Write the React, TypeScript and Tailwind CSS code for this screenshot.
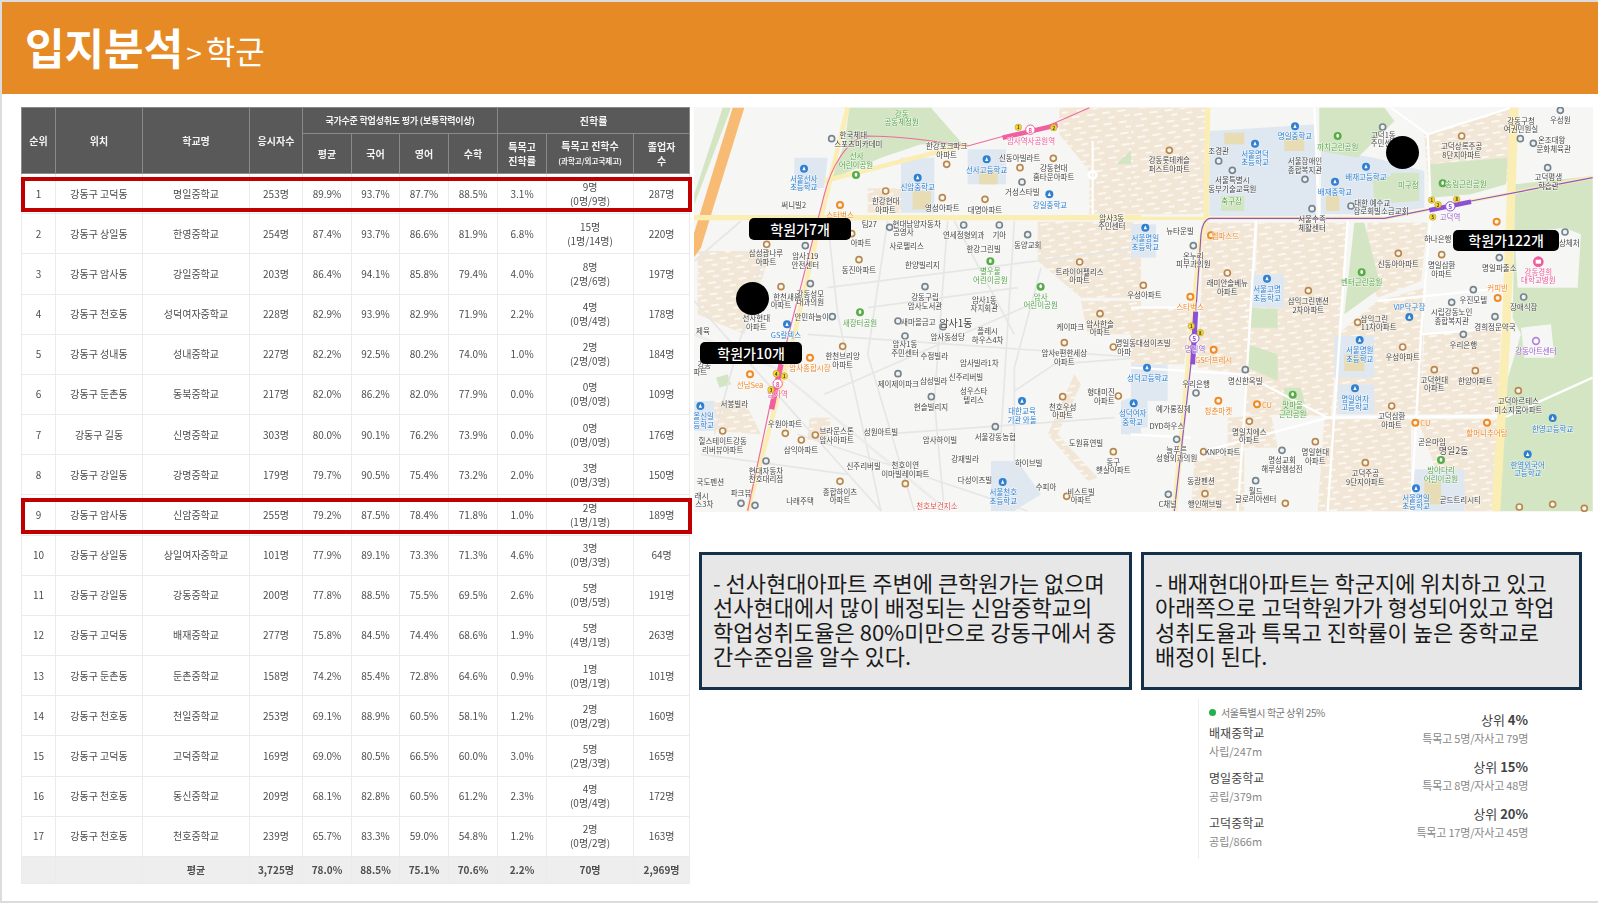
import React from "react";

type R = [number, string, string, string, string, string, string, string, string, string, string, string];
const rows: R[] = [
  [1,"강동구 고덕동","명일중학교","253명","89.9%","93.7%","87.7%","88.5%","3.1%","9명","(0명/9명)","287명"],
  [2,"강동구 상일동","한영중학교","254명","87.4%","93.7%","86.6%","81.9%","6.8%","15명","(1명/14명)","220명"],
  [3,"강동구 암사동","강일중학교","203명","86.4%","94.1%","85.8%","79.4%","4.0%","8명","(2명/6명)","197명"],
  [4,"강동구 천호동","성덕여자중학교","228명","82.9%","93.9%","82.9%","71.9%","2.2%","4명","(0명/4명)","178명"],
  [5,"강동구 성내동","성내중학교","227명","82.2%","92.5%","80.2%","74.0%","1.0%","2명","(2명/0명)","184명"],
  [6,"강동구 둔촌동","동북중학교","217명","82.0%","86.2%","82.0%","77.9%","0.0%","0명","(0명/0명)","109명"],
  [7,"강동구 길동","신명중학교","303명","80.0%","90.1%","76.2%","73.9%","0.0%","0명","(0명/0명)","176명"],
  [8,"강동구 강일동","강명중학교","179명","79.7%","90.5%","75.4%","73.2%","2.0%","3명","(0명/3명)","150명"],
  [9,"강동구 암사동","신암중학교","255명","79.2%","87.5%","78.4%","71.8%","1.0%","2명","(1명/1명)","189명"],
  [10,"강동구 상일동","상일여자중학교","101명","77.9%","89.1%","73.3%","71.3%","4.6%","3명","(0명/3명)","64명"],
  [11,"강동구 강일동","강동중학교","200명","77.8%","88.5%","75.5%","69.5%","2.6%","5명","(0명/5명)","191명"],
  [12,"강동구 고덕동","배재중학교","277명","75.8%","84.5%","74.4%","68.6%","1.9%","5명","(4명/1명)","263명"],
  [13,"강동구 둔촌동","둔촌중학교","158명","74.2%","85.4%","72.8%","64.6%","0.9%","1명","(0명/1명)","101명"],
  [14,"강동구 천호동","천일중학교","253명","69.1%","88.9%","60.5%","58.1%","1.2%","2명","(0명/2명)","160명"],
  [15,"강동구 고덕동","고덕중학교","169명","69.0%","80.5%","66.5%","60.0%","3.0%","5명","(2명/3명)","165명"],
  [16,"강동구 천호동","동신중학교","209명","68.1%","82.8%","60.5%","61.2%","2.3%","4명","(0명/4명)","172명"],
  [17,"강동구 천호동","천호중학교","239명","65.7%","83.3%","59.0%","54.8%","1.2%","2명","(0명/2명)","163명"],
];

const COLORS: Record<string, string> = {
  d: "#444444", b: "#2f80d0", g: "#56a24a", o: "#ee8a2c", p: "#ef5b9c", u: "#9a5fd0", r: "#e2524a",
};
type L = [number, number, string, string?, number?];

const z3Labels: L[] = [
  [662,37,"강동","g"],[662,62,"공동체정원","g"],[517,101,"한국체대"],[532,127,"스포츠미카데미"],[527,165,"선사","g"],[525,192,"어린이공원","g"],
  [797,135,"한강포크파크"],[797,160,"아파트"],[1050,120,"암사역사공원역","p"],[1016,170,"신동아빌라트"],[1118,200,"강동현대"],[1118,226,"홈타운아파트"],
  [917,205,"선사고등학교","b"],[368,232,"서울선사","b"],[368,258,"초등학교","b"],[710,258,"신암중학교","b"],[1024,273,"거성스타빌"],[1107,310,"강일중학교","b"],
  [614,300,"한강현대"],[614,325,"아파트"],[784,319,"영성아파트"],[912,325,"대명아파트"],[338,310,"써니빌2"],[477,342,"스타벅스","o"],[1292,350,"암사3동"],[1292,374,"주민센터"],
  [565,369,"팀27"],[707,367,"현대남양자동차"],[667,393,"공영사"],[848,401,"연세정형외과"],[955,401,"기아"],[1040,430,"동양교회"],[540,425,"아파트"],[677,434,"사로펠리스"],
  [908,442,"한강그린빌"],[255,456,"삼성광나루"],[255,482,"아파트"],[373,464,"암사119"],[373,490,"안전센터"],[534,505,"동진아파트"],[724,492,"한양빌리지"],[1196,511,"트라이어펠리스"],[1196,537,"아파트"],
  [928,510,"별우물","g"],[928,536,"어린이공원","g"],[318,587,"한천새롬"],[300,612,"아파트"],[388,578,"강동성모"],[388,603,"내과의원"],[1079,586,"암사","g"],[1079,612,"어린이공원","g"],
  [732,586,"강동구립"],[732,613,"암사도서관"],[910,596,"암사1동"],[910,620,"자치회관"],[392,648,"안민하늘이"],[537,664,"새장터공원","g"],[712,662,"새마을금고"],[825,665,"암사1동","d",30],
  [1168,677,"케이파크"],[1257,667,"암사한솔"],[1257,693,"아파트"],[226,651,"선사현대"],[226,677,"아파트"],[920,690,"플레시"],[920,716,"하우스4차"],[315,700,"GS칼텍스","b"],[800,707,"암사동성당"],
  [672,729,"암사1동"],[672,755,"주민센터"],[1150,755,"암사e편한세상"],[1150,781,"아파트"],[1340,752,"아파트"],[760,763,"수정빌라"],[485,765,"한천브리앙"],[485,790,"아파트"],
  [66,688,"제육"],[895,786,"암사빌라1차"],[387,801,"암사종합시장","o"],[70,790,"강동"],[58,813,"파트"],[207,850,"선남Sea","o"],[652,849,"제이제이파크"],[758,838,"삼성빌라"],[855,827,"신주리버빌"],
  [878,870,"성우스타"],[878,896,"텔리스"],[1260,873,"형대미진"],[1270,898,"아파트"],[1145,917,"천호우성"],[1145,942,"아파트"],[160,909,"서봉빌라"],[290,877,"암사역","p"],
  [750,917,"현솔빌리지"],[1023,930,"대한교육","b"],[1023,955,"기관 와돌","b"],[68,945,"올신일","b"],[68,970,"등학교","b"],[312,968,"우원아파트"],
  [943,1006,"서울강동농협"],[467,990,"브라운스톤"],[467,1015,"암사아파트"],[600,991,"성원아트빌"],[777,1015,"암사하이빌"],[1215,1025,"도원휴연빌"],[125,1020,"힐스테이트강동"],[125,1047,"리버뷰아파트"],
  [360,1047,"삼익아파트"],[1297,1081,"동구"],[1297,1107,"햇살아파트"],[852,1074,"강재빌라"],[1043,1084,"하이브빌"],[548,1095,"신주리버빌"],[673,1092,"천호이연"],[673,1118,"이마빌레이파트"],
  [255,1108,"현대자동차"],[255,1134,"천호대리점"],[882,1137,"다성이즈빌"],[967,1172,"서울천호","b"],[967,1198,"초등학교","b"],[1095,1157,"수피아"],[1200,1172,"비스트빌"],[1200,1197,"아파트"],
  [477,1171,"종합하이츠"],[477,1196,"아파트"],[88,1143,"국도펜션"],[180,1175,"파크뷰"],[357,1200,"나래주택"],[62,1183,"래시"],[70,1209,"스3차"],[768,1215,"천호보건지소","r"],
];
const z4Labels: L[] = [
  [1170,58,"강동구청"],[1170,84,"여권민원실"],[1288,55,"우성원"],[757,100,"고덕1동"],[750,125,"주민센"],[492,105,"명일중학교","b"],[620,137,"까치근린공원","g"],[992,135,"고덕상록주공"],[992,161,"8단지아파트"],
  [1262,116,"온조대왕"],[1268,142,"문화체육관"],[263,150,"조경관"],[372,157,"서울명덕","b"],[372,183,"초등학교","b"],[522,179,"서울장애인"],[522,205,"종합복지관"],[115,176,"강동롯데캐슬"],[115,202,"퍼스트아파트"],
  [705,227,"배재고등학교","b"],[832,252,"미구정","g"],[304,237,"서울특별시"],[304,263,"동부기술교육원"],[1252,228,"고덕평생"],[1252,255,"학습관"],[612,272,"배재중학교","b"],[1005,248,"송림근린공원","g"],[302,298,"축구장","g"],
  [724,304,"대한 예수교"],[750,328,"장로회빌소금교회"],[543,354,"서울수족"],[543,380,"체활센터"],[957,347,"고덕역","u"],[147,388,"뉴타운빌"],[43,410,"서울명일","b"],[43,436,"초등학교","b"],[283,404,"엠파스드","o"],
  [920,413,"하나은행"],[1315,424,"상체처"],[187,463,"온누리"],[187,489,"피부과의원"],[802,487,"신동아아파트"],[932,491,"명일삼환"],[932,517,"아파트"],[1105,501,"명일파출소"],[1222,511,"강동경희","p"],[1222,536,"대학교병원","p"],
  [692,543,"벤터근린공원","g"],[289,546,"래미안솔베뉴"],[289,571,"아파트"],[408,563,"서울고명","b"],[408,589,"초등학교","b"],[1100,561,"커피빈","o"],[40,582,"우성아파트"],[532,599,"삼익그린맨션"],[532,625,"2차아파트"],
  [177,617,"스타벅스","o"],[1027,595,"우진모텔"],[835,618,"VIP닥구장","b"],[962,633,"시립강동노인"],[962,659,"종합복지관"],[1178,618,"장애식장"],[730,652,"삼익그린"],[743,678,"11차아파트"],[1092,677,"경희정문약국"],
  [997,730,"우리은행"],[36,726,"명일동대성이즈빌"],[1215,750,"강동아트센터","u"],[686,746,"서울명원","b"],[686,773,"초등학교","b"],[192,742,"명일역","u"],[815,767,"우성아파트"],[248,777,"GS더프레시","o"],[50,830,"성덕고등학교","b"],
  [910,835,"고덕현대"],[910,861,"아파트"],[1033,840,"한양아파트"],[195,847,"우리은행"],[343,838,"명신한옥빌"],[1162,899,"고덕아르테스"],[1162,925,"미소지움아파트"],[672,892,"명일여자","b"],[672,918,"고등학교","b"],
  [262,928,"청춘마켓","o"],[485,911,"맛마을","g"],[485,937,"근린공원","g"],[408,910,"CU","o"],[127,923,"예가롱징체"],[5,936,"성덕여자","b"],[5,962,"중학교","b"],[782,945,"고덕삼환"],[782,971,"아파트"],[883,966,"CU","o"],
  [1068,995,"할머니추어탕","o"],[1265,982,"한영고등학교","b"],[108,975,"DYD하우스"],[355,991,"명일치에스"],[355,1017,"아파트"],[903,1023,"곧은마임"],[968,1050,"명일2동","d",27],[1190,1090,"한영외국어","b"],[1190,1116,"고등학교","b"],
  [137,1045,"늘푸른"],[137,1071,"성형외과의원"],[275,1052,"KNP아파트"],[453,1077,"명성교회"],[453,1103,"해루살렘성전"],[553,1052,"명일현대"],[553,1078,"아파트"],[703,1115,"고덕주공"],[703,1141,"9단지아파트"],
  [930,1106,"방아다리","g"],[930,1132,"어린이공원","g"],[210,1140,"동광펜션"],[374,1168,"월드"],[374,1194,"글로리아센터"],[222,1208,"행인해브빌"],[855,1189,"서울명일","b"],[855,1215,"초등학교","b"],[988,1195,"곧드트리시티"],[110,1209,"C채널"],
];

type Pins = { a: number[][]; g: number[][]; b: number[][]; n: number[][]; o: number[][] };
const z3Pins: Pins = {
  a: [[797,190],[1017,200],[1117,172],[614,270],[784,290],[912,295],[257,430],[512,398],[534,476],[1196,483],[300,557],[1257,638],[1150,725],[1297,738],[485,736],[1145,887],[1312,885],[125,990],[313,997],[403,1002],[361,1017],[1297,1052],[477,1141],[673,1148],[1157,1186]],
  g: [[452,113],[1023,243],[626,379],[848,372],[955,372],[1040,401],[373,434],[388,548],[732,557],[454,647],[651,660],[786,677],[672,705],[651,818],[751,887],[943,977],[255,1080],[180,1207],[222,1213]],
  b: [[369,203],[710,230],[917,175],[1105,280],[318,670],[1023,900],[58,915],[965,1143]],
  n: [[525,222],[928,481],[1079,557],[537,634]],
  o: [[477,312],[387,770],[207,820]],
};
const z4Pins: Pins = {
  a: [[115,148],[992,105],[802,457],[932,461],[289,516],[532,569],[37,553],[680,664],[815,738],[910,806],[1033,809],[1162,869],[782,915],[355,961],[553,1022],[703,1085],[218,1052],[222,1178],[1165,1218],[1265,1210],[1360,1222],[463,1207]],
  g: [[263,180],[304,208],[522,235],[543,323],[660,315],[187,434],[1105,470],[1027,566],[962,604],[1178,588],[1092,647],[997,700],[1250,200],[1168,113],[1207,127],[343,806],[195,876],[137,1015],[453,1048],[374,1139],[112,1180],[1302,393],[1288,28],[755,78]],
  b: [[492,76],[372,128],[705,197],[612,242],[43,380],[408,533],[835,648],[686,717],[672,862],[48,800],[8,907],[1265,951],[1190,1060],[855,1162]],
  n: [[620,105],[935,247],[692,514],[485,881],[930,1077]],
  o: [[240,403],[178,587],[1097,362],[1100,591],[248,746],[262,899],[378,910],[853,965],[1068,965]],
};

const BEIGE = "#f2e7d6";
const BLUE = "#dfe8f1";
const GREEN = "#d3e5c3";
const SAND = "#e8dcb4";

const z3Beige = ["1135,20 1380,20 1380,340 1225,340 1225,210 1135,100","1070,362 1380,362 1380,590 1200,590 1070,480","50,450 270,450 190,700 50,640","560,262 660,262 660,335 560,335","1200,600 1380,600 1380,700 1220,700","100,900 190,900 240,1000 100,990","385,950 450,950 440,1020 380,1020","1100,1000 1180,820 1200,850 1130,1000 1250,1130 1220,1140"];
const z3Blue = ["660,170 760,170 760,335 660,335","860,145 975,145 975,250 860,250","340,170 440,170 430,260 340,270","40,900 100,900 100,990 40,990","930,1080 1010,1080 1080,1180 1000,1230 930,1230","1320,900 1380,880 1380,1000 1320,1000"];
const z3Sand = ["695,270 750,270 750,325 695,325","895,210 950,210 950,250 895,250"];
const z3Green = ["505,20 750,20 850,135 720,130 600,170 450,235 490,130","125,20 150,20 40,310 40,280","1305,190 1380,120 1380,190","105,830 140,820 150,850 115,860"];

const z4Beige = ["0,20 225,20 225,340 0,340","880,100 1140,20 1140,240 1030,270 890,240","380,365 650,365 600,945 340,940 340,600 375,500","710,365 890,365 870,540 740,590 700,500","740,600 880,560 870,940 610,940 620,700","880,700 1110,680 1100,940 870,940","0,620 180,620 160,790 0,790","220,365 375,365 360,620 340,820 200,800","580,955 840,955 840,1230 560,1230","860,955 1100,955 1090,1230 960,1230","290,950 420,940 440,1040 290,1040","190,1080 340,1050 340,1230 180,1230"];
const z4Blue = ["235,90 555,70 555,345 235,345","570,145 730,170 880,210 880,320 760,340 570,340","360,520 460,520 460,620 360,620","610,705 730,705 730,830 610,830","620,850 730,850 730,940 620,940","1130,950 1320,890 1385,1010 1250,1080 1130,1020","850,1105 1000,1105 1000,1230 840,1230","0,370 75,370 75,470 0,470","0,790 110,790 110,900 0,900","0,900 50,900 50,980 0,980"];
const z4Sand = ["280,95 340,95 340,130 280,130","460,110 520,110 520,150 460,150","585,285 625,285 625,330 585,330","640,760 700,760 700,810 640,810","1170,960 1240,960 1230,1030 1170,1030","880,1140 930,1140 930,1210 880,1210"];
const z4Green = ["565,20 760,20 790,60 680,170 565,150","890,190 1130,170 1125,250 1020,280 900,290","1150,250 1385,225 1385,1230 1100,1230 1110,900 1170,700 1145,650 1150,400","670,365 700,365 750,560 640,640","350,730 440,760 440,840 350,800","360,620 440,625 440,680 360,680","460,860 510,860 530,945 450,945","725,235 780,225 790,290 730,300","780,215 865,215 865,300 780,305","270,285 340,285 340,330 270,330"];
const z4White = ["1150,400 1300,380 1350,400 1340,560 1160,560","1170,680 1260,670 1270,770 1180,770"];

const z3Streets = ["M40 600 L600 1230","M250 450 L100 1000","M440 360 L470 640 L600 1230","M620 360 L560 760 L700 1230","M800 360 L760 900 L790 1230","M1000 360 L960 1000","M1080 500 L1000 800 L1000 1230","M380 700 L1380 770","M440 560 L1380 440","M430 880 L1050 610","M1000 870 L1120 790 L1380 770","M350 1000 L1040 1230","M60 1060 L500 1120","M600 1000 L1300 950","M820 360 L1000 700","M180 360 L40 480","M560 620 L1010 560"];
const z4Streets = ["M650 360 L590 1230","M890 100 L900 330 L870 700 L840 1230","M780 20 L890 100 L1140 20","M590 950 L1130 945 L1385 830","M375 360 L340 940 L320 1230","M0 800 L340 820 L590 950","M550 20 L565 350","M0 620 L200 620","M220 1050 L590 950","M740 600 L1130 560","M870 700 L1130 680","M0 1000 L180 1010"];

function Poly({ items, fill }: { items: string[]; fill: string }) {
  return <>{items.map((p, i) => <polygon key={i} points={p} fill={fill} />)}</>;
}
function Labels({ items }: { items: L[] }) {
  return (
    <>
      {items.map(([x, y, t, c, s], i) => (
        <text key={i} x={x} y={y} textAnchor="middle" dominantBaseline="central" fontSize={s ?? 22.5} fill={COLORS[c ?? "d"]} stroke="#ffffff" strokeOpacity={0.75} strokeWidth={3} paintOrder="stroke">{t}</text>
      ))}
    </>
  );
}
function PinSet({ p }: { p: Pins }) {
  return (
    <>
      {p.a.map(([x, y], i) => <circle key={"a" + i} cx={x} cy={y} r={9} fill="#fbf6ee" stroke="#b9874c" strokeWidth={5} />)}
      {p.g.map(([x, y], i) => <circle key={"g" + i} cx={x} cy={y} r={9} fill="#eef1f2" stroke="#76848e" strokeWidth={5} />)}
      {p.b.map(([x, y], i) => <g key={"b" + i}><circle cx={x} cy={y} r={12} fill="#2f80d0" /><path d={`M${x - 5} ${y + 5} L${x} ${y - 7} L${x + 5} ${y + 5} Z`} fill="#ffffff" /></g>)}
      {p.n.map(([x, y], i) => <g key={"n" + i}><circle cx={x} cy={y} r={12} fill="#58ad4a" /><ellipse cx={x} cy={y - 1} rx={4} ry={6} fill="#ffffff" /></g>)}
      {p.o.map(([x, y], i) => <circle key={"o" + i} cx={x} cy={y} r={9} fill="#fff7ee" stroke="#f08a24" strokeWidth={6} />)}
    </>
  );
}
function Station({ x, y, n, color }: { x: number; y: number; n: string; color: string }) {
  return (
    <g>
      <circle cx={x} cy={y} r={14} fill="#ffffff" stroke={color} strokeWidth={3} />
      <text x={x} y={y} textAnchor="middle" dominantBaseline="central" fontSize={20} fontWeight={700} fill={color}>{n}</text>
    </g>
  );
}
function Exit({ x, y, n }: { x: number; y: number; n: string }) {
  return (
    <g>
      <circle cx={x} cy={y} r={10} fill="#f5d431" stroke="#8a7a20" strokeWidth={1} />
      <text x={x} y={y} textAnchor="middle" dominantBaseline="central" fontSize={13} fontWeight={700} fill="#333">{n}</text>
    </g>
  );
}

function MapArt() {
  return (
    <svg viewBox="693 106 899 405" className="block h-[405px] w-[899px]" fontFamily="'Noto Sans CJK KR', sans-serif">
      <defs>
        <pattern id="dash" width="46" height="34" patternUnits="userSpaceOnUse" patternTransform="rotate(-8)">
          <rect x="4" y="6" width="24" height="5" fill="#ffffff" opacity="0.8" />
          <rect x="22" y="22" width="18" height="5" fill="#ffffff" opacity="0.8" />
        </pattern>
      </defs>
      <rect x="693" y="106" width="899" height="405" fill="#f6f6f5" />
      <g transform="translate(680 100) scale(0.33333)">
        <Poly items={z3Beige} fill={BEIGE} />
        <Poly items={z3Beige} fill="url(#dash)" />
        <Poly items={z3Blue} fill={BLUE} />
        <Poly items={z3Sand} fill={SAND} />
        <Poly items={z3Green} fill={GREEN} />
        <polygon points="155,20 190,20 100,310 60,440 38,470 38,400 75,280" fill="#f8bb74" />
        {z3Streets.map((d, i) => <path key={i} d={d} fill="none" stroke="#e6e6e6" strokeWidth={5} />)}
        <circle cx={1235} cy={222} r={11} fill="none" stroke="#ffffff" strokeWidth={8} />
        <path d="M1235 120 L1235 340" stroke="#ffffff" strokeWidth={6} />
        <path d="M500 20 L420 350 L340 700 L200 1230" fill="none" stroke="#fbeeb4" strokeWidth={14} />
        <path d="M860 130 L430 240" fill="none" stroke="#fbeeb4" strokeWidth={14} />
        <path d="M38 350 L1380 350" stroke="#fbeeb4" strokeWidth={16} />
        <path d="M40 700 L280 800 L800 1230" fill="none" stroke="#ececec" strokeWidth={8} />
        <path d="M1225 20 L1100 75 L970 105 L860 135 C780 125 680 105 560 105 C500 110 450 200 430 280 L300 790 L270 900 L200 1230" fill="none" stroke="#ef6a9f" strokeWidth={3.5} />
        <path d="M965 110 L1130 72" stroke="#f0609e" strokeWidth={14} />
        <path d="M300 790 L272 925" stroke="#f0609e" strokeWidth={16} />
        <PinSet p={z3Pins} />
        <Labels items={z3Labels} />
        <Station x={1048} y={86} n="8" color="#ef5b9c" />
        <Exit x={1012} y={79} n="1" />
        <Exit x={1118} y={80} n="2" />
        <Station x={290} y={848} n="8" color="#ef5b9c" />
        <Exit x={286} y={818} n="4" />
        <Exit x={310} y={825} n="1" />
        <Exit x={270} y={866} n="3" />
      </g>
      <g transform="translate(1130 100) scale(0.33333)">
        <Poly items={z4Beige} fill={BEIGE} />
        <Poly items={z4Beige} fill="url(#dash)" />
        <Poly items={z4Blue} fill={BLUE} />
        <Poly items={z4Sand} fill={SAND} />
        <Poly items={z4Green} fill={GREEN} />
        <Poly items={z4White} fill="#f6f6f5" />
        {z4Streets.map((d, i) => <path key={i} d={d} fill="none" stroke="#ffffff" strokeWidth={7} />)}
        <path d="M230 20 L225 350 L205 450 L130 1230" fill="none" stroke="#fbeeb4" strokeWidth={16} />
        <path d="M0 352 L760 352 L1385 228" fill="none" stroke="#fbeeb4" strokeWidth={10} />
        <path d="M1150 20 L1125 700 L1095 1230" fill="none" stroke="#fbeeb4" strokeWidth={26} />
        <path d="M1385 230 L1020 300 L760 352 L240 352 C220 352 212 380 210 400 L190 700 L130 1230" fill="none" stroke="#8d55cf" strokeWidth={3.5} />
        <path d="M895 328 L1020 302" stroke="#8d4fd6" strokeWidth={14} />
        <path d="M194 632 L185 790" stroke="#8d4fd6" strokeWidth={15} />
        <PinSet p={z4Pins} />
        <circle cx={1222} cy={482} r={16} fill="#ef5b9c" />
        <rect x={1214} y={476} width={16} height={12} fill="#ffffff" />
        <circle cx={1215} cy={720} r={10} fill="#fff" stroke="#b77fd8" strokeWidth={5} />
        <Labels items={z4Labels} />
        <Station x={958} y={316} n="5" color="#8d4fd6" />
        <Exit x={902} y={297} n="1" />
        <Exit x={921} y={311} n="2" />
        <Exit x={977} y={295} n="8" />
        <Exit x={905} y={348} n="5" />
        <Station x={190} y={712} n="5" color="#8d4fd6" />
        <Exit x={181} y={675} n="1" />
        <Exit x={208} y={695} n="8" />
      </g>
    </svg>
  );
}

const th = "border border-[#8a8a8a] text-center align-middle font-bold text-[#f4f4f4]";
const td = "border border-[#ebebeb] p-0 text-center align-middle";

function RedBox() {
  return <div className="pointer-events-none absolute inset-y-0 left-[-1px] w-[671px] pb-[1px] pt-[2.5px]"><div className="h-full border-[4px] border-[#c00000]" /></div>;
}

function Table() {
  return (
    <table className="w-[668px] table-fixed border-collapse text-[10px] leading-[14px] text-[#4d4d4d]">
      <colgroup>
        <col className="w-[34px]" /><col className="w-[87px]" /><col className="w-[107px]" /><col className="w-[53px]" />
        <col className="w-[49px]" /><col className="w-[48px]" /><col className="w-[49px]" /><col className="w-[49px]" />
        <col className="w-[49px]" /><col className="w-[87px]" /><col className="w-[56px]" />
      </colgroup>
      <thead className="bg-[#595959]">
        <tr className="h-[26px]">
          <th rowSpan={2} className={th}>순위</th>
          <th rowSpan={2} className={th}>위치</th>
          <th rowSpan={2} className={th}>학교명</th>
          <th rowSpan={2} className={th}>응시자수</th>
          <th colSpan={4} className={th + " text-[9px] tracking-[-0.2px]"}>국가수준 학업성취도 평가 (보통학력이상)</th>
          <th colSpan={3} className={th}>진학률</th>
        </tr>
        <tr className="h-[40px]">
          <th className={th}>평균</th>
          <th className={th}>국어</th>
          <th className={th}>영어</th>
          <th className={th}>수학</th>
          <th className={th}>특목고<br />진학률</th>
          <th className={th}>특목고 진학수<br /><span className="text-[7.5px] leading-[14px]">(과학고/외고국제고)</span></th>
          <th className={th}>졸업자<br />수</th>
        </tr>
      </thead>
      <tbody>
        {rows.map((r) => (
          <tr key={r[0]} className="h-[40.18px]">
            <td className={td + " relative"}>{r[0]}{(r[0] === 1 || r[0] === 9) && <RedBox />}</td>
            <td className={td}>{r[1]}</td>
            <td className={td}>{r[2]}</td>
            <td className={td}>{r[3]}</td>
            <td className={td}>{r[4]}</td>
            <td className={td}>{r[5]}</td>
            <td className={td}>{r[6]}</td>
            <td className={td}>{r[7]}</td>
            <td className={td}>{r[8]}</td>
            <td className={td}>{r[9]}<br />{r[10]}</td>
            <td className={td}>{r[11]}</td>
          </tr>
        ))}
        <tr className="h-[27px] bg-[#eeeeee] font-bold">
          <td className={td} /><td className={td} />
          <td className={td}>평균</td>
          <td className={td}>3,725명</td>
          <td className={td}>78.0%</td>
          <td className={td}>88.5%</td>
          <td className={td}>75.1%</td>
          <td className={td}>70.6%</td>
          <td className={td}>2.2%</td>
          <td className={td}>70명</td>
          <td className={td}>2,969명</td>
        </tr>
      </tbody>
    </table>
  );
}

function Note({ w, lines }: { w: string; lines: string[] }) {
  return (
    <div className={`flex h-[138px] items-center border-[3px] border-[#14304a] bg-[#e7e7e7] pb-[5px] pl-[11px] text-[22px] leading-[24.4px] text-[#1a1a1a] ${w}`}>
      <p className="whitespace-nowrap">
        {lines.map((l, i) => <span key={i} className="block">{l}</span>)}
      </p>
    </div>
  );
}

const schools = [["배재중학교", "사립/247m"], ["명일중학교", "공립/379m"], ["고덕중학교", "공립/866m"]];
const ranks = [["상위 ", "4%", "특목고 5명/자사고 79명"], ["상위 ", "15%", "특목고 8명/자사고 48명"], ["상위 ", "20%", "특목고 17명/자사고 45명"]];

function Badge({ className, children }: { className: string; children: React.ReactNode }) {
  return <div className={`absolute flex items-center justify-center rounded-[5px] bg-black text-[14px] font-medium text-white ${className}`}>{children}</div>;
}

export default function App() {
  return (
    <div className="h-[903px] w-[1598px] overflow-hidden border-b-2 border-l-2 border-t-2 border-[#dcdcdc] bg-white font-['Noto_Sans_CJK_KR',sans-serif]">
      <header className="flex h-[92px] items-end bg-[#e68a25] pb-[20px] pl-[23px] text-white">
        <span className="text-[43px] font-bold leading-[56px]">입지분석</span>
        <span className="mb-[2px] ml-[3px] text-[28px] leading-[40px]">&gt;</span>
        <span className="mb-[2px] ml-[4px] text-[32px] leading-[44px]">학군</span>
      </header>
      <main className="flex pl-[19px] pt-[13px]">
        <div className="blur-[0.3px]"><Table /></div>
        <div className="ml-[4px] flex w-[899px] flex-col">
          <div className="relative h-[405px] w-[899px] overflow-hidden">
            <div className="blur-[0.35px]"><MapArt /></div>
            <div className="absolute left-[42px] top-[175px] h-[33px] w-[33px] rounded-full bg-black" />
            <div className="absolute left-[692px] top-[29px] h-[33px] w-[33px] rounded-full bg-black" />
            <Badge className="left-[55px] top-[111px] h-[22px] w-[102px]">학원가7개</Badge>
            <Badge className="left-[6px] top-[235px] h-[22px] w-[102px]">학원가10개</Badge>
            <Badge className="left-[759px] top-[123px] h-[21px] w-[106px]">학원가122개</Badge>
          </div>
          <div className="ml-[5px] mt-[40px] flex gap-[9px]">
            <Note w="w-[433px]" lines={["- 선사현대아파트 주변에 큰학원가는 없으며", "선사현대에서 많이 배정되는 신암중학교의", "학업성취도율은 80%미만으로 강동구에서 중", "간수준임을 알수 있다."]} />
            <Note w="w-[441px]" lines={["- 배재현대아파트는 학군지에 위치하고 있고", "아래쪽으로 고덕학원가가 형성되어있고 학업", "성취도율과 특목고 진학률이 높은 중학교로", "배정이 된다."]} />
          </div>
          <div className="ml-[504px] mt-[9px] flex h-[160px] w-[330px] justify-between border-l border-[#eeeeee] pl-[10px] pt-[6px]">
            <div className="flex flex-col">
              <div className="flex h-[14px] items-center gap-[5px] text-[10px] tracking-[-0.4px] text-[#777777]">
                <span className="h-[7px] w-[7px] rounded-full bg-[#22b14c]" />서울특별시 학군 상위 25%
              </div>
              {schools.map(([n, d]) => (
                <div key={n} className="mt-[5px] h-[40px]">
                  <div className="text-[12px] leading-[18px] text-[#444444]">{n}</div>
                  <div className="text-[11px] leading-[18px] text-[#888888]">{d}</div>
                </div>
              ))}
            </div>
            <div className="flex flex-col items-end pt-[6px]">
              {ranks.map(([a, b, c]) => (
                <div key={b} className="flex h-[47px] flex-col items-end">
                  <div className="text-[13px] leading-[18px] text-[#444444]">{a}<b className="font-bold">{b}</b></div>
                  <div className="text-[11px] leading-[18px] tracking-[-0.2px] text-[#888888]">{c}</div>
                </div>
              ))}
            </div>
          </div>
        </div>
      </main>
    </div>
  );
}
